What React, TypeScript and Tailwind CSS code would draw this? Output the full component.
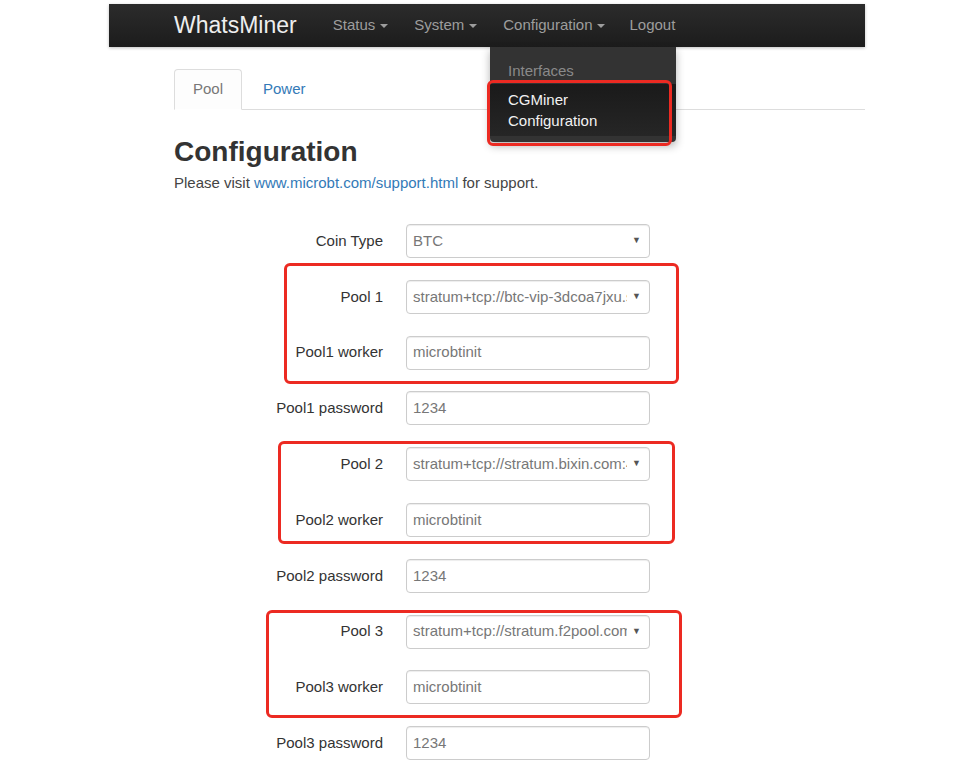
import React from "react";

type Row = { label: string; value: string; select?: boolean };

const rows: Row[] = [
  { label: "Coin Type", value: "BTC", select: true },
  { label: "Pool 1", value: "stratum+tcp://btc-vip-3dcoa7jxu.sz.f2pool.com:3333", select: true },
  { label: "Pool1 worker", value: "microbtinit" },
  { label: "Pool1 password", value: "1234" },
  { label: "Pool 2", value: "stratum+tcp://stratum.bixin.com:443", select: true },
  { label: "Pool2 worker", value: "microbtinit" },
  { label: "Pool2 password", value: "1234" },
  { label: "Pool 3", value: "stratum+tcp://stratum.f2pool.com:3333", select: true },
  { label: "Pool3 worker", value: "microbtinit" },
  { label: "Pool3 password", value: "1234" },
];

function Caret() {
  return (
    <span className="ml-[5px] inline-block h-0 w-0 border-x-[4px] border-t-[4px] border-x-transparent border-t-[#9d9d9d]" />
  );
}

function NavItem({ label, caret = true, className = "" }: { label: string; caret?: boolean; className?: string }) {
  return (
    <div className={"flex items-center text-[15px] text-[#9d9d9d] " + className}>
      <span>{label}</span>
      {caret && <Caret />}
    </div>
  );
}

function Field({ row }: { row: Row }) {
  return (
    <div className="flex h-[34px] items-center">
      <label className="w-[117px] text-right text-[15px] text-[#333]">{row.label}</label>
      <div className="ml-[23px] flex h-[34px] w-[244px] items-center rounded-[4px] border border-[#ccc] bg-white pl-[6px] pr-[8px] text-[15px] text-[#777] shadow-[inset_0_1px_1px_rgba(0,0,0,0.075)]">
        <span className="min-w-0 flex-1 overflow-hidden whitespace-nowrap">{row.value}</span>
        {row.select && <span className="ml-[5px] shrink-0 text-[9px] text-[#555]">▼</span>}
      </div>
    </div>
  );
}

export default function App() {
  return (
    <div className="relative h-[772px] w-[960px] overflow-hidden bg-white pt-[4px] font-['Liberation_Sans',Arial,sans-serif]">
      {/* navbar */}
      <nav className="ml-[109px] flex h-[43px] w-[756px] items-center bg-gradient-to-b from-[#2c2c2c] to-[#1c1c1c] pl-[65px] shadow-[0_1px_3px_rgba(0,0,0,0.25)]">
        <span className="text-[23px] leading-none text-[#eee]">WhatsMiner</span>
        <NavItem label="Status" className="ml-[36px]" />
        <NavItem label="System" className="ml-[26px]" />
        <NavItem label="Configuration" className="ml-[26px]" />
        <NavItem label="Logout" caret={false} className="ml-[24px]" />
      </nav>

      {/* dropdown */}
      <div className="absolute left-[490px] top-[47px] z-10 w-[186px] rounded-b-[4px] bg-[#333] pb-[6px] pt-[10px] text-[15px] shadow-[0_4px_8px_rgba(0,0,0,0.3)]">
        <div className="px-[18px] py-[3px] leading-[21px] text-[#8a8a8a]">Interfaces</div>
        <div className="bg-gradient-to-b from-[#1a1a1a] to-[#262626] px-[18px] py-[5px] leading-[21px] text-[#f2f2f2]">
          CGMiner
          <br />
          Configuration
        </div>
      </div>

      <div className="ml-[174px] mr-[95px]">
        {/* tabs */}
        <div className="mt-[22px] flex h-[41px] border-b border-[#ddd] text-[15px]">
          <div className="-mb-px flex w-[68px] items-center justify-center rounded-t-[4px] border border-[#ddd] border-b-white bg-[#fdfdfd] text-[#777]">
            Pool
          </div>
          <div className="flex items-center px-[21px] text-[#337ab7]">Power</div>
        </div>

        <h1 className="mt-[26px] text-[28px] font-bold leading-[32px] text-[#333]">Configuration</h1>
        <p className="mt-[5px] text-[15px] leading-[20px] text-[#444]">
          Please visit <span className="text-[#337ab7]">www.microbt.com/support.html</span> for support.
        </p>

        <div className="ml-[92px] mt-[31px] flex flex-col gap-[21.8px]">
          {rows.map((r, i) => (
            <Field key={i} row={r} />
          ))}
        </div>
      </div>

      {/* red highlight boxes */}
      <div className="pointer-events-none absolute left-[487px] top-[80px] z-20 h-[66px] w-[185px] rounded-[6px] border-[3px] border-[#ec2a22]" />
      <div className="pointer-events-none absolute left-[284px] top-[263px] h-[121px] w-[395px] rounded-[6px] border-[3px] border-[#ec2a22]" />
      <div className="pointer-events-none absolute left-[278px] top-[441px] h-[103px] w-[397px] rounded-[6px] border-[3px] border-[#ec2a22]" />
      <div className="pointer-events-none absolute left-[266px] top-[610px] h-[108px] w-[416px] rounded-[6px] border-[3px] border-[#ec2a22]" />
    </div>
  );
}
